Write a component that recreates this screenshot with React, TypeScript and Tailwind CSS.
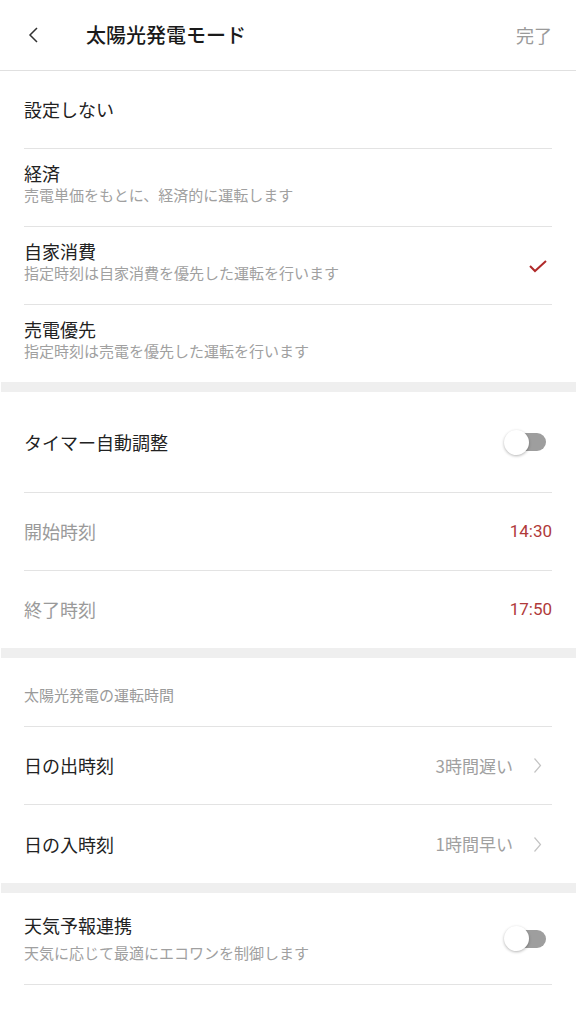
import React from "react";

const font = { fontFamily: '"Noto Sans CJK JP", "Noto Sans", sans-serif' };

function Toggle() {
  return (
    <div className="relative w-[42px] h-[26px] flex items-center mr-[6px]">
      <div className="absolute left-[12px] right-[0px] h-[18px] rounded-full bg-[#9e9e9e]" />
      <div className="absolute left-0 w-[25px] h-[25px] rounded-full bg-white shadow-[0_1px_3px_rgba(0,0,0,0.3)]" />
    </div>
  );
}

function Chevron() {
  return (
    <svg width="9" height="17" viewBox="0 0 9 17" fill="none" className="mr-[10px]">
      <path d="M1.5 1.5l6 7-6 7" stroke="#c4c4c4" strokeWidth="1.2" />
    </svg>
  );
}

function Divider() {
  return <div className="mx-[24px] h-px bg-[#e3e3e3]" />;
}

function Gap() {
  return <div className="h-[10px] bg-[#efefef] border-l border-white" />;
}

function OptionRow({ title, sub, checked }: { title: string; sub?: string; checked?: boolean }) {
  return (
    <div className="h-[77px] px-[24px] flex items-center justify-between">
      <div className="flex flex-col mb-[9px]">
        <div className="text-[18px] leading-[24px] text-[#222]">{title}</div>
        {sub && <div className="text-[15px] leading-[20px] text-[#a0a0a0]">{sub}</div>}
      </div>
      {checked && (
        <svg width="20" height="16" viewBox="0 0 20 16" fill="none" className="mr-[4px]">
          <path d="M2 8l5 5 11-10" stroke="#b02a2a" strokeWidth="2" />
        </svg>
      )}
    </div>
  );
}

export default function App() {
  return (
    <div className="w-[576px] h-[1024px] bg-white overflow-hidden" style={font}>
      {/* Header */}
      <div className="h-[71px] flex items-center px-[24px] border-b border-[#e0e0e0]">
        <svg width="14" height="20" viewBox="0 0 14 20" fill="none" className="ml-[3px]">
          <path d="M10 3L3 10l7 7" stroke="#333" strokeWidth="1.5" />
        </svg>
        <div className="ml-[45px] text-[20px] font-medium text-[#1a1a1a]">太陽光発電モード</div>
        <div className="ml-auto text-[18px] text-[#9a9a9a]">完了</div>
      </div>

      <div className="h-[77px] px-[24px] flex items-center">
        <div className="text-[18px] text-[#222]">設定しない</div>
      </div>
      <Divider />
      <OptionRow title="経済" sub="売電単価をもとに、経済的に運転します" />
      <Divider />
      <OptionRow title="自家消費" sub="指定時刻は自家消費を優先した運転を行います" checked />
      <Divider />
      <OptionRow title="売電優先" sub="指定時刻は売電を優先した運転を行います" />
      <Gap />

      <div className="h-[100px] px-[24px] flex items-center justify-between">
        <div className="text-[18px] text-[#222]">タイマー自動調整</div>
        <Toggle />
      </div>
      <Divider />
      <div className="h-[77px] px-[24px] flex items-center justify-between">
        <div className="text-[18px] text-[#9a9a9a]">開始時刻</div>
        <div className="text-[17px] text-[#b03a3a]" style={{ fontFamily: 'Roboto, "Noto Sans", sans-serif' }}>14:30</div>
      </div>
      <Divider />
      <div className="h-[77px] px-[24px] flex items-center justify-between">
        <div className="text-[18px] text-[#9a9a9a]">終了時刻</div>
        <div className="text-[17px] text-[#b03a3a]" style={{ fontFamily: 'Roboto, "Noto Sans", sans-serif' }}>17:50</div>
      </div>
      <Gap />

      <div className="h-[68px] px-[24px] pt-[6px] flex items-center">
        <div className="text-[15px] text-[#9a9a9a]">太陽光発電の運転時間</div>
      </div>
      <Divider />
      <div className="h-[77px] px-[24px] flex items-center justify-between">
        <div className="text-[18px] text-[#222]">日の出時刻</div>
        <div className="flex items-center gap-[20px]">
          <div className="text-[17px] text-[#a0a0a0]">3時間遅い</div>
          <Chevron />
        </div>
      </div>
      <Divider />
      <div className="h-[78px] px-[24px] flex items-center justify-between">
        <div className="text-[18px] text-[#222]">日の入時刻</div>
        <div className="flex items-center gap-[20px]">
          <div className="text-[17px] text-[#a0a0a0]">1時間早い</div>
          <Chevron />
        </div>
      </div>
      <Gap />

      <div className="h-[91px] px-[24px] flex items-center justify-between">
        <div className="flex flex-col">
          <div className="text-[18px] leading-[28px] text-[#222]">天気予報連携</div>
          <div className="text-[15px] leading-[28px] text-[#a0a0a0]">天気に応じて最適にエコワンを制御します</div>
        </div>
        <Toggle />
      </div>
      <Divider />
    </div>
  );
}
